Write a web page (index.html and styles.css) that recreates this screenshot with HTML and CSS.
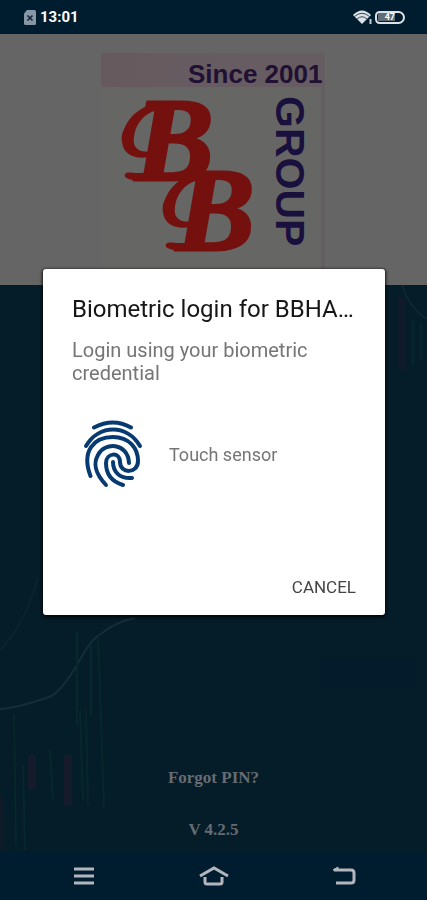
FILE: index.html
```html
<!DOCTYPE html>
<html lang="en">
<head>
<meta charset="utf-8">
<meta name="viewport" content="width=device-width, initial-scale=1">
<title>Biometric login</title>
<link rel="stylesheet" href="styles.css">
</head>
<body>
<div class="screen">
  <div class="status">
    <svg class="sim" viewBox="0 0 12 15" aria-hidden="true"><path d="M3 0H10.500Q12 0 12 1.500V13.500Q12 15 10.500 15H1.500Q0 15 0 13.500V3.500Z" fill="#8797a6"/><path d="M3.500 5.500l5 5m0-5l-5 5" stroke="#152939" stroke-width="1.700"/></svg>
    <span class="time">13:01</span>
    <svg class="wifi" viewBox="0 0 20 15" aria-hidden="true"><path d="M0 5Q9 -4 18 5L9 14Z" fill="#dce2e6"/><path d="M1.500 6.500Q9 0 16.500 6.500M4 9Q9 4.500 14 9" fill="none" stroke="#31495a" stroke-width="1"/><path d="M17.500 9v5" stroke="#c5cdd3" stroke-width="2"/></svg>
    <span class="battery"><span class="charge">47</span></span>
  </div>

  <header class="brand">
    <svg class="logo" viewBox="0 0 226 232" role="img" aria-label="BB Group, since 2001">
      <defs>
        <linearGradient id="band" x1="0" x2="1"><stop offset="0" stop-color="#665a5f"/><stop offset="1" stop-color="#665d62"/></linearGradient>
      </defs>
      <rect width="226" height="232" fill="#666765"/>
      <rect width="224" height="34" fill="url(#band)"/>
      <rect x="220" y="34" width="4" height="198" fill="#635e61"/>
      <text class="since" x="87" y="30">Since 2001</text>
      <text class="group" transform="translate(175 43) rotate(90)">GROUP</text>
      <g class="mark">
        <text class="initial" x="34" y="127">B</text>
        <path d="M96 49H69C58 49 50 51 42 55C33 60 27 67 24 74C21 80 20 84 21 89C22 100 31 107 50 104L56 98C39 101 31 96 33 84C34 75 38 69 42 65C49 58 59 55 80 55Z"/>
        <path d="M49 118C36 123 28 117 24 121C22 127 33 127 46 128H84V124Z"/>
      </g>
      <g class="mark" transform="translate(41 70)">
        <text class="initial" x="34" y="127">B</text>
        <path d="M96 49H69C58 49 50 51 42 55C33 60 27 67 24 74C21 80 20 84 21 89C22 100 31 107 50 104L56 98C39 101 31 96 33 84C34 75 38 69 42 65C49 58 59 55 80 55Z"/>
        <path d="M49 118C36 123 28 117 24 121C22 127 33 127 46 128H84V124Z"/>
      </g>
    </svg>
  </header>

  <main class="content">
    <svg class="chart" viewBox="0 0 427 567" preserveAspectRatio="none" aria-hidden="true">
      <g fill="none">
        <path d="M0 365Q25 340 38 292" stroke="#09232f" stroke-width="2"/>
        <path d="M0 424Q18 423 52 411Q63 403 77 380Q92 352 101 349Q115 337 135 333" stroke="#152d38" stroke-width="2"/>
        <path d="M77 347V440M80 425L83 515M91 360V430M98 352L104 522M86 425L88 520M14 430L16 560M23 480L25 565M50 465L53 515" stroke="#06272c" stroke-width="2"/>
        <path d="M32 470V505M68 470V520" stroke="#151b2b" stroke-width="8"/>
        <path d="M1 510V565" stroke="#101b29" stroke-width="4"/>
        <path d="M402 0Q410 24 427 34" stroke="#0d2733" stroke-width="2"/>
        <path d="M402 12V85" stroke="#0f1b2a" stroke-width="8"/>
        <path d="M413 34V80M421 38V76" stroke="#06252c" stroke-width="3"/>
      </g>
      <rect x="320" y="372" width="96" height="30" fill="#041b2c"/>
    </svg>
    <div class="links">
      <a class="forgot" href="#forgot">Forgot PIN?</a>
      <span>V 4.2.5</span>
    </div>
  </main>

  <nav class="nav" aria-label="System">
    <button type="button" aria-label="Recent apps"><svg viewBox="0 0 30 20"><path d="M5 3H25M5 10H25M5 17H25"/></svg></button>
    <button type="button" aria-label="Home"><svg viewBox="0 0 30 20"><path d="M1 10L15 2L29 10M6 11V16Q6 18 8 18H21Q23 18 23 16V11"/></svg></button>
    <button type="button" aria-label="Back"><svg viewBox="0 0 30 20"><path d="M5 4H22Q25 4 25 7V14Q25 17 22 17H7"/><path d="M4 4L9 1V4Z" class="tip"/></svg></button>
  </nav>
</div>

<div class="overlay">
  <section class="dialog" role="dialog" aria-modal="true" aria-labelledby="title">
    <h1 id="title">Biometric login for BBHA…</h1>
    <p class="subtitle">Login using your biometric credential</p>
    <div class="sensor">
      <svg class="finger" viewBox="0 0 60 70" aria-hidden="true">
        <path d="M11 8.500Q30 -1.500 48 8.500"/>
        <path d="M3 27C16 5 44 5 57 27"/>
        <path d="M7.500 57C-2 32 11 18 30 18C46 18 55 29 55 42C55 55 37 55 37 43C37 32 23 34 23 44C23 56 30 63 40 66"/>
        <path d="M23 66C10 52 11 43 15 36C21 23 45 23 46 44"/>
        <path d="M30 43C30 54 38 60 49 59"/>
      </svg>
      <span>Touch sensor</span>
    </div>
    <button class="cancel" type="button">CANCEL</button>
  </section>
</div>
</body>
</html>
```
FILE: styles.css
```css
* { box-sizing: border-box; }

body {
  margin: 0;
  background: #051c29;
  font-family: Roboto, "Liberation Sans", sans-serif;
}

button {
  padding: 0;
  border: 0;
  background: none;
  font: inherit;
  cursor: pointer;
}

.screen {
  display: flex;
  flex-direction: column;
  min-height: 100vh;
}

.status {
  display: flex;
  align-items: center;
  height: 34px;
  padding: 0 22px 0 24px;
  background: #001d30;
  color: #fff;
}

.sim { width: 12px; height: 15px; }

.time {
  margin: 0 auto 0 4px;
  font-size: 15px;
  font-weight: 700;
}

.wifi { width: 20px; height: 15px; }

.battery {
  display: flex;
  align-items: center;
  width: 30px;
  height: 13px;
  margin-left: 2px;
  padding: 1px;
  border: 2px solid #dce2e6;
  border-radius: 5px 7px 7px 5px;
}

.charge {
  width: 17px;
  background: #5d6e7b;
  font-size: 9px;
  line-height: 8px;
  font-weight: 700;
  text-align: right;
}

.brand {
  display: flex;
  justify-content: center;
  padding: 19px 0 0;
  background: #656565;
}

.logo { display: block; width: 226px; height: 232px; }

.since,
.group {
  font-family: "Liberation Sans", sans-serif;
  font-weight: 700;
}

.since { fill: #201033; font-size: 26px; }
.group { fill: #1a103e; font-size: 41px; }

.mark { fill: #74110f; }

.initial {
  font-family: "Liberation Serif", serif;
  font-size: 118px;
  font-style: italic;
  font-weight: 700;
  stroke: #74110f;
  stroke-width: 3;
  stroke-linejoin: round;
}

.content {
  position: relative;
  display: flex;
  flex: 1;
  flex-direction: column;
  justify-content: flex-end;
  background: #051c29;
}

.chart {
  position: absolute;
  inset: 0;
  width: 100%;
  height: 100%;
}

.links {
  position: relative;
  display: flex;
  flex-direction: column;
  align-items: center;
  gap: 32px;
  padding-bottom: 12px;
  color: #666c72;
  font: 700 17px/20px "Liberation Serif", serif;
}

.forgot { color: inherit; text-decoration: none; }

.nav {
  display: flex;
  align-items: center;
  justify-content: space-between;
  height: 48px;
  padding: 0 68px 0 69px;
  background: #001d30;
}

.nav svg {
  display: block;
  width: 30px;
  height: 20px;
  overflow: visible;
  fill: none;
  stroke: #b4b6be;
  stroke-width: 3;
}

.nav .tip { fill: #b4b6be; stroke-width: 1; }

.overlay {
  position: fixed;
  inset: 0;
  display: flex;
  align-items: center;
  padding: 0 42px 16px 43px;
}

.dialog {
  display: flex;
  flex-direction: column;
  width: 100%;
  padding: 24px 29px 16px;
  border-radius: 3px;
  background: #fff;
  box-shadow: 0 1px 3px 1px #000c;
}

h1 {
  margin: 0;
  overflow: hidden;
  color: #161616;
  font-size: 24px;
  font-weight: 400;
  line-height: 32px;
  text-overflow: ellipsis;
  white-space: nowrap;
}

.subtitle {
  margin: 14px 0 0;
  color: #757575;
  font-size: 20px;
  line-height: 23px;
}

.sensor {
  display: flex;
  align-items: center;
  gap: 26px;
  margin: 34px 0 86px;
  padding-left: 11px;
  color: #757575;
  font-size: 18px;
}

.finger {
  width: 60px;
  height: 70px;
  fill: none;
  stroke: #073a70;
  stroke-linecap: round;
  stroke-width: 4;
}

.cancel {
  align-self: flex-end;
  height: 24px;
  color: #444;
  font-size: 17px;
  line-height: 24px;
}
```
